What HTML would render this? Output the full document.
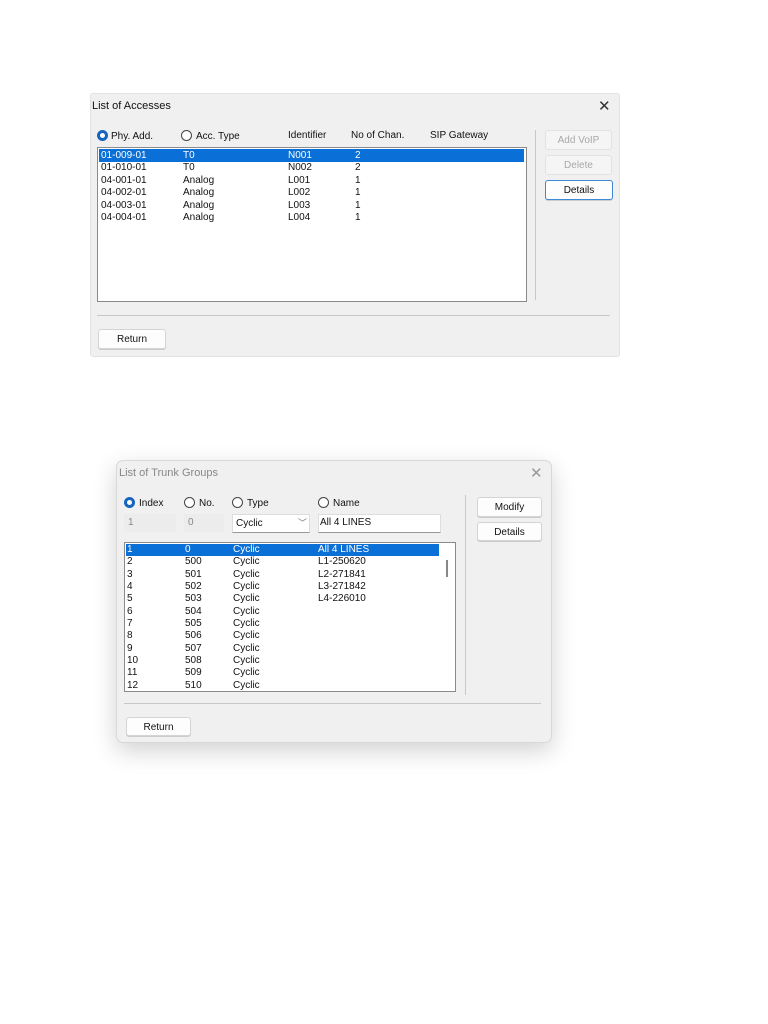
<!DOCTYPE html>
<html><head><meta charset="utf-8"><style>
*{margin:0;padding:0;box-sizing:border-box}
body{width:768px;height:1024px;background:#fff;position:relative;overflow:hidden;font-family:"Liberation Sans",sans-serif;font-size:10px;color:#111}
.a{position:absolute;white-space:nowrap}
.dlg{position:absolute;background:#f0f0f0}
.btn{position:absolute;background:#fdfdfd;border:1px solid #d4d4d4;border-radius:3px;text-align:center;font-size:10px;box-shadow:0 1px 0 #ccc}
.dis{color:#a8a8a8;background:#f5f5f5;border-color:#e2e2e2;box-shadow:none}
.list{position:absolute;background:#fff;border:1px solid #8a8a8a}
.sel{position:absolute;background:#0a6fd6}
.rd{position:absolute;width:11px;height:11px;border:1px solid #444;border-radius:50%;background:#fff}
.rd.on{border:3px solid #1565c0}
.w{color:#fff}
</style></head><body>

<!-- Dialog 1 -->
<div class="dlg" style="left:90px;top:93px;width:530px;height:264px;border:1px solid #e2e2e2;border-radius:3px"></div>
<div class="a" style="left:92px;top:100px;font-size:11px">List of Accesses</div>
<div class="a" style="left:598px;top:97px;font-size:15px;color:#333">✕</div>
<div class="rd on" style="left:97px;top:130px"></div>
<div class="a" style="left:111px;top:131px">Phy. Add.</div>
<div class="rd" style="left:181px;top:130px"></div>
<div class="a" style="left:196px;top:131px">Acc. Type</div>
<div class="a" style="left:288px;top:130px">Identifier</div>
<div class="a" style="left:351px;top:130px">No of Chan.</div>
<div class="a" style="left:430px;top:130px">SIP Gateway</div>
<div class="list" style="left:97px;top:147px;width:430px;height:155px"></div>
<div class="sel" style="left:99px;top:149px;width:425px;height:13px"></div>
<div class="a w" style="left:101px;top:150px">01-009-01</div><div class="a w" style="left:183px;top:150px">T0</div><div class="a w" style="left:288px;top:150px">N001</div><div class="a w" style="left:355px;top:150px">2</div>
<div class="a" style="left:101px;top:162px">01-010-01</div><div class="a" style="left:183px;top:162px">T0</div><div class="a" style="left:288px;top:162px">N002</div><div class="a" style="left:355px;top:162px">2</div>
<div class="a" style="left:101px;top:175px">04-001-01</div><div class="a" style="left:183px;top:175px">Analog</div><div class="a" style="left:288px;top:175px">L001</div><div class="a" style="left:355px;top:175px">1</div>
<div class="a" style="left:101px;top:187px">04-002-01</div><div class="a" style="left:183px;top:187px">Analog</div><div class="a" style="left:288px;top:187px">L002</div><div class="a" style="left:355px;top:187px">1</div>
<div class="a" style="left:101px;top:200px">04-003-01</div><div class="a" style="left:183px;top:200px">Analog</div><div class="a" style="left:288px;top:200px">L003</div><div class="a" style="left:355px;top:200px">1</div>
<div class="a" style="left:101px;top:212px">04-004-01</div><div class="a" style="left:183px;top:212px">Analog</div><div class="a" style="left:288px;top:212px">L004</div><div class="a" style="left:355px;top:212px">1</div>
<div class="a" style="left:535px;top:130px;width:1px;height:170px;background:#c8c8c8"></div>
<div class="btn dis" style="left:545px;top:130px;width:67px;height:20px;line-height:20px">Add VoIP</div>
<div class="btn dis" style="left:545px;top:155px;width:67px;height:20px;line-height:20px">Delete</div>
<div class="btn" style="left:545px;top:180px;width:68px;height:20px;line-height:20px;border-color:#3f8ad8">Details</div>
<div class="a" style="left:97px;top:315px;width:513px;height:1px;background:#c8c8c8"></div>
<div class="btn" style="left:98px;top:329px;width:68px;height:20px;line-height:20px">Return</div>

<!-- Dialog 2 -->
<div class="dlg" style="left:116px;top:460px;width:436px;height:283px;border-radius:7px;border:1px solid #d8d8d8;box-shadow:0 8px 24px rgba(0,0,0,0.18)"></div>
<div class="a" style="left:119px;top:467px;font-size:11px;color:#888">List of Trunk Groups</div>
<div class="a" style="left:530px;top:464px;font-size:15px;color:#999">✕</div>
<div class="rd on" style="left:124px;top:497px"></div><div class="a" style="left:139px;top:498px">Index</div>
<div class="rd" style="left:184px;top:497px"></div><div class="a" style="left:199px;top:498px">No.</div>
<div class="rd" style="left:232px;top:497px"></div><div class="a" style="left:247px;top:498px">Type</div>
<div class="rd" style="left:318px;top:497px"></div><div class="a" style="left:333px;top:498px">Name</div>
<div class="a" style="left:124px;top:514px;width:52px;height:18px;background:#ececec"></div><div class="a" style="left:128px;top:517px;color:#888">1</div>
<div class="a" style="left:184px;top:514px;width:40px;height:18px;background:#ececec"></div><div class="a" style="left:188px;top:517px;color:#888">0</div>
<div class="a" style="left:232px;top:514px;width:78px;height:19px;background:#fff;border:1px solid #ddd;border-bottom-color:#999"></div><div class="a" style="left:236px;top:518px">Cyclic</div><div class="a" style="left:298px;top:516px;color:#777;font-size:9px">﹀</div>
<div class="a" style="left:318px;top:514px;width:123px;height:19px;background:#fff;border:1px solid #ddd;border-bottom-color:#999"></div><div class="a" style="left:320px;top:517px">All 4 LINES</div>
<div class="list" style="left:124px;top:542px;width:332px;height:150px;overflow:hidden"></div>
<div class="sel" style="left:126px;top:544px;width:313px;height:12px"></div>
<div class="a" style="left:446px;top:560px;width:2px;height:17px;background:#888"></div>
<div class="a" style="left:127px;top:544px;line-height:12.35px;color:#111;height:147px;overflow:hidden;width:20px"><span class="w">1</span><br>2<br>3<br>4<br>5<br>6<br>7<br>8<br>9<br>10<br>11<br>12</div>
<div class="a" style="left:185px;top:544px;line-height:12.35px;height:147px;overflow:hidden"><span class="w">0</span><br>500<br>501<br>502<br>503<br>504<br>505<br>506<br>507<br>508<br>509<br>510</div>
<div class="a" style="left:233px;top:544px;line-height:12.35px;height:147px;overflow:hidden"><span class="w">Cyclic</span><br>Cyclic<br>Cyclic<br>Cyclic<br>Cyclic<br>Cyclic<br>Cyclic<br>Cyclic<br>Cyclic<br>Cyclic<br>Cyclic<br>Cyclic</div>
<div class="a" style="left:318px;top:544px;line-height:12.35px"><span class="w">All 4 LINES</span><br>L1-250620<br>L2-271841<br>L3-271842<br>L4-226010</div>
<div class="a" style="left:465px;top:495px;width:1px;height:200px;background:#c8c8c8"></div>
<div class="btn" style="left:477px;top:497px;width:65px;height:20px;line-height:20px">Modify</div>
<div class="btn" style="left:477px;top:522px;width:65px;height:19px;line-height:19px">Details</div>
<div class="a" style="left:124px;top:703px;width:417px;height:1px;background:#c8c8c8"></div>
<div class="btn" style="left:126px;top:717px;width:65px;height:19px;line-height:19px">Return</div>
</body></html>
